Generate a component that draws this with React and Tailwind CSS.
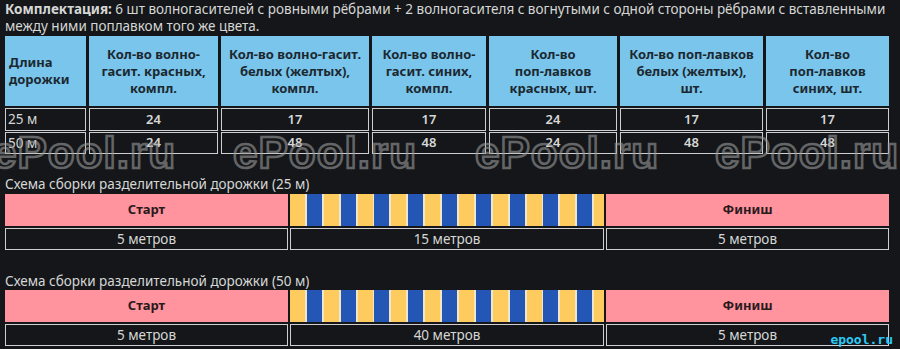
import React from 'react'

const cols = 'grid grid-cols-[81px_129px_148px_114px_128px_143px_123px] gap-x-[3px]'
const lane = 'grid grid-cols-[283px_314px_283px] gap-x-[2px]'

const heads = [
    ['Длина', 'дорожки'],
    ['Кол-во волно-', 'гасит. красных,', 'компл.'],
    ['Кол-во волно-гасит.', 'белых (желтых),', 'компл.'],
    ['Кол-во волно-', 'гасит. синих,', 'компл.'],
    ['Кол-во', 'поп-лавков', 'красных, шт.'],
    ['Кол-во поп-лавков', 'белых (желтых),', 'шт.'],
    ['Кол-во', 'поп-лавков', 'синих, шт.'],
]

const rows = [
    { h: 'h-[23px]', cells: ['25 м', '24', '17', '17', '24', '17', '17'] },
    { h: 'h-[22px]', cells: ['50 м', '24', '48', '48', '24', '48', '48'] },
]

const Lane = ({ title, middle, mt }) => (
    <>
        <div className={`${mt} text-[13.5px] leading-[17px]`}>{title}</div>
        <div className={`${lane} h-[32px]`}>
            <div className="flex items-center justify-center bg-[#ff939e] font-bold text-[#2a1a1c]">Старт</div>
            <div className="bg-[repeating-linear-gradient(90deg,#fdcb5e_0px,#fdcb5e_15px,#efe6cc_15px,#efe6cc_16.9px,#2457b5_16.9px,#2457b5_31.9px,#efe6cc_31.9px,#efe6cc_33.8px)]"></div>
            <div className="flex items-center justify-center bg-[#ff939e] font-bold text-[#2a1a1c]">Финиш</div>
        </div>
        <div className={`${lane} mt-[2px] h-[22px] text-[13.5px]`}>
            <div className="flex items-center justify-center border border-[#cfcfcf]">5 метров</div>
            <div className="flex items-center justify-center border border-[#cfcfcf]">{middle}</div>
            <div className="flex items-center justify-center border border-[#cfcfcf]">5 метров</div>
        </div>
    </>
)

const App = () => {
    return (
        <div className="relative h-[349px] w-[900px] overflow-hidden bg-[#141619] font-['Noto_Sans',sans-serif] text-[13px] text-[#d6d6d6]">
            <div className="px-[5px] pt-[1px]">
                <p className="text-[13.5px] leading-[17px] whitespace-nowrap">
                    <b className="font-bold">Комплектация:</b> 6 шт волногасителей с ровными рёбрами + 2 волногасителя с вогнутыми с одной стороны рёбрами с вставленными
                    <br />
                    между ними поплавком того же цвета.
                </p>

                {/* table */}
                <div className={`${cols} mt-[1px] h-[70px]`}>
                    {heads.map((lines, i) => (
                        <div
                            key={i}
                            className={i === 0
                                ? "flex flex-col justify-center bg-[#79c5eb] pl-[4px] font-bold leading-[17px] text-[#1c2830]"
                                : "flex flex-col items-center justify-center bg-[#79c5eb] text-center font-bold leading-[17px] text-[#1c2830]"}
                        >
                            {lines.map((l, j) => <span key={j}>{l}</span>)}
                        </div>
                    ))}
                </div>
                {rows.map((r, ri) => (
                    <div key={ri} className={`${cols} ${ri === 0 ? 'mt-[2px]' : 'mt-[1px]'} ${r.h}`}>
                        {r.cells.map((c, ci) => (
                            <div
                                key={ci}
                                className={ci === 0
                                    ? "flex items-center border border-[#cfcfcf] pl-[2px] text-[13.5px]"
                                    : "flex items-center justify-center border border-[#cfcfcf] font-semibold"}
                            >
                                {c}
                            </div>
                        ))}
                    </div>
                ))}

                <Lane title="Схема сборки разделительной дорожки (25 м)" middle="15 метров" mt="mt-[22px] mb-[1px]" />
                <Lane title="Схема сборки разделительной дорожки (50 м)" middle="40 метров" mt="mt-[23px]" />
            </div>

            {/* watermark */}
            {[-8, 233, 475, 715].map((x) => (
                <div
                    key={x}
                    className="pointer-events-none absolute top-[131px] font-['Liberation_Sans',sans-serif] text-[44px] font-bold leading-none tracking-[1px] text-transparent opacity-60 [-webkit-text-stroke:2.5px_#9a9a9a]"
                    style={{ left: x }}
                >
                    ePool.ru
                </div>
            ))}

            <div className="absolute bottom-[3px] right-[7px] font-['DejaVu_Sans_Mono',monospace] text-[13px] font-bold leading-none text-[#2ccaf5]">
                epool.ru
            </div>
        </div>
    )
}

export default App
